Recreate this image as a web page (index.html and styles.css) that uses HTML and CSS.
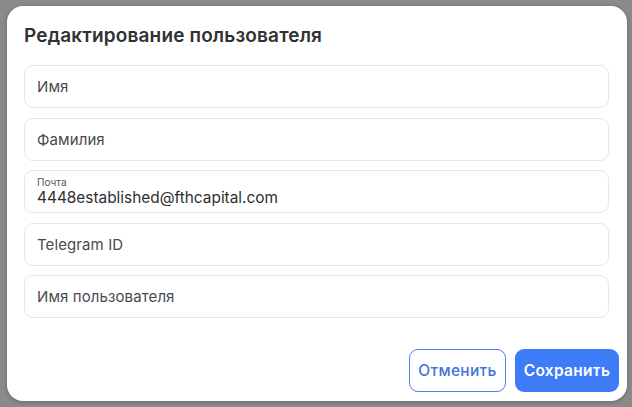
FILE: index.html
```html
<!DOCTYPE html>
<html lang="ru">
<head>
<meta charset="utf-8">
<link rel="stylesheet" href="styles.css">
</head>
<body>
<div class="backdrop">
  <div class="dialog">
    <h1 class="title">Редактирование пользователя</h1>
    <div class="fields">
      <div class="field"><span class="placeholder">Имя</span></div>
      <div class="field"><span class="placeholder">Фамилия</span></div>
      <div class="field filled">
        <span class="label">Почта</span>
        <span class="value">4448established@fthcapital.com</span>
      </div>
      <div class="field"><span class="placeholder">Telegram ID</span></div>
      <div class="field"><span class="placeholder">Имя пользователя</span></div>
    </div>
    <div class="actions">
      <button class="btn btn-outline">Отменить</button>
      <button class="btn btn-primary">Сохранить</button>
    </div>
  </div>
</div>
</body>
</html>
```

FILE: styles.css
```css
html, body {
  margin: 0;
  padding: 0;
}
body {
  background: #8a8a8a;
  font-family: Inter, "Noto Sans", sans-serif;
  width: 632px;
  height: 407px;
  overflow: hidden;
}
.backdrop {
  padding: 6px 5px 6px 7px;
}
.dialog {
  box-sizing: border-box;
  width: 620px;
  height: 395px;
  background: #fff;
  border-radius: 16px;
  box-shadow: 0 1px 4px rgba(0,0,0,0.25);
  display: flex;
  flex-direction: column;
  padding: 18px 8px 9px 17px;
}
.title {
  margin: 0;
  font-size: 19px;
  line-height: 24px;
  font-weight: 600;
  letter-spacing: 0.15px;
  color: #303133;
}
.fields {
  margin-top: 17px;
  margin-right: 10px;
  display: flex;
  flex-direction: column;
  gap: 9.5px;
}
.field {
  box-sizing: border-box;
  height: 43px;
  border: 1px solid #e6e7ea;
  border-radius: 9px;
  padding: 0 12px;
  display: flex;
  flex-direction: column;
  justify-content: center;
}
.placeholder {
  font-size: 15px;
  letter-spacing: 0.1px;
  color: #4a4a4d;
}
.filled {
  justify-content: flex-start;
  padding-top: 5px;
}
.label {
  font-size: 10px;
  line-height: 12px;
  color: #555;
}
.value {
  font-size: 15.4px;
  line-height: 19px;
  color: #2e2e30;
}
.actions {
  margin-top: auto;
  display: flex;
  justify-content: flex-end;
  gap: 9px;
}
.btn {
  box-sizing: border-box;
  height: 43px;
  border-radius: 9px;
  font-family: Inter, "Noto Sans", sans-serif;
  font-size: 15.5px;
  letter-spacing: 0.3px;
  padding: 0;
  cursor: pointer;
}
.btn-outline {
  background: #fff;
  border: 1px solid #4a80f0;
  color: #3f74d9;
  font-weight: 500;
  width: 97px;
}
.btn-primary {
  background: #3d7bf7;
  border: none;
  color: #fff;
  font-weight: 600;
  width: 104px;
}
```
